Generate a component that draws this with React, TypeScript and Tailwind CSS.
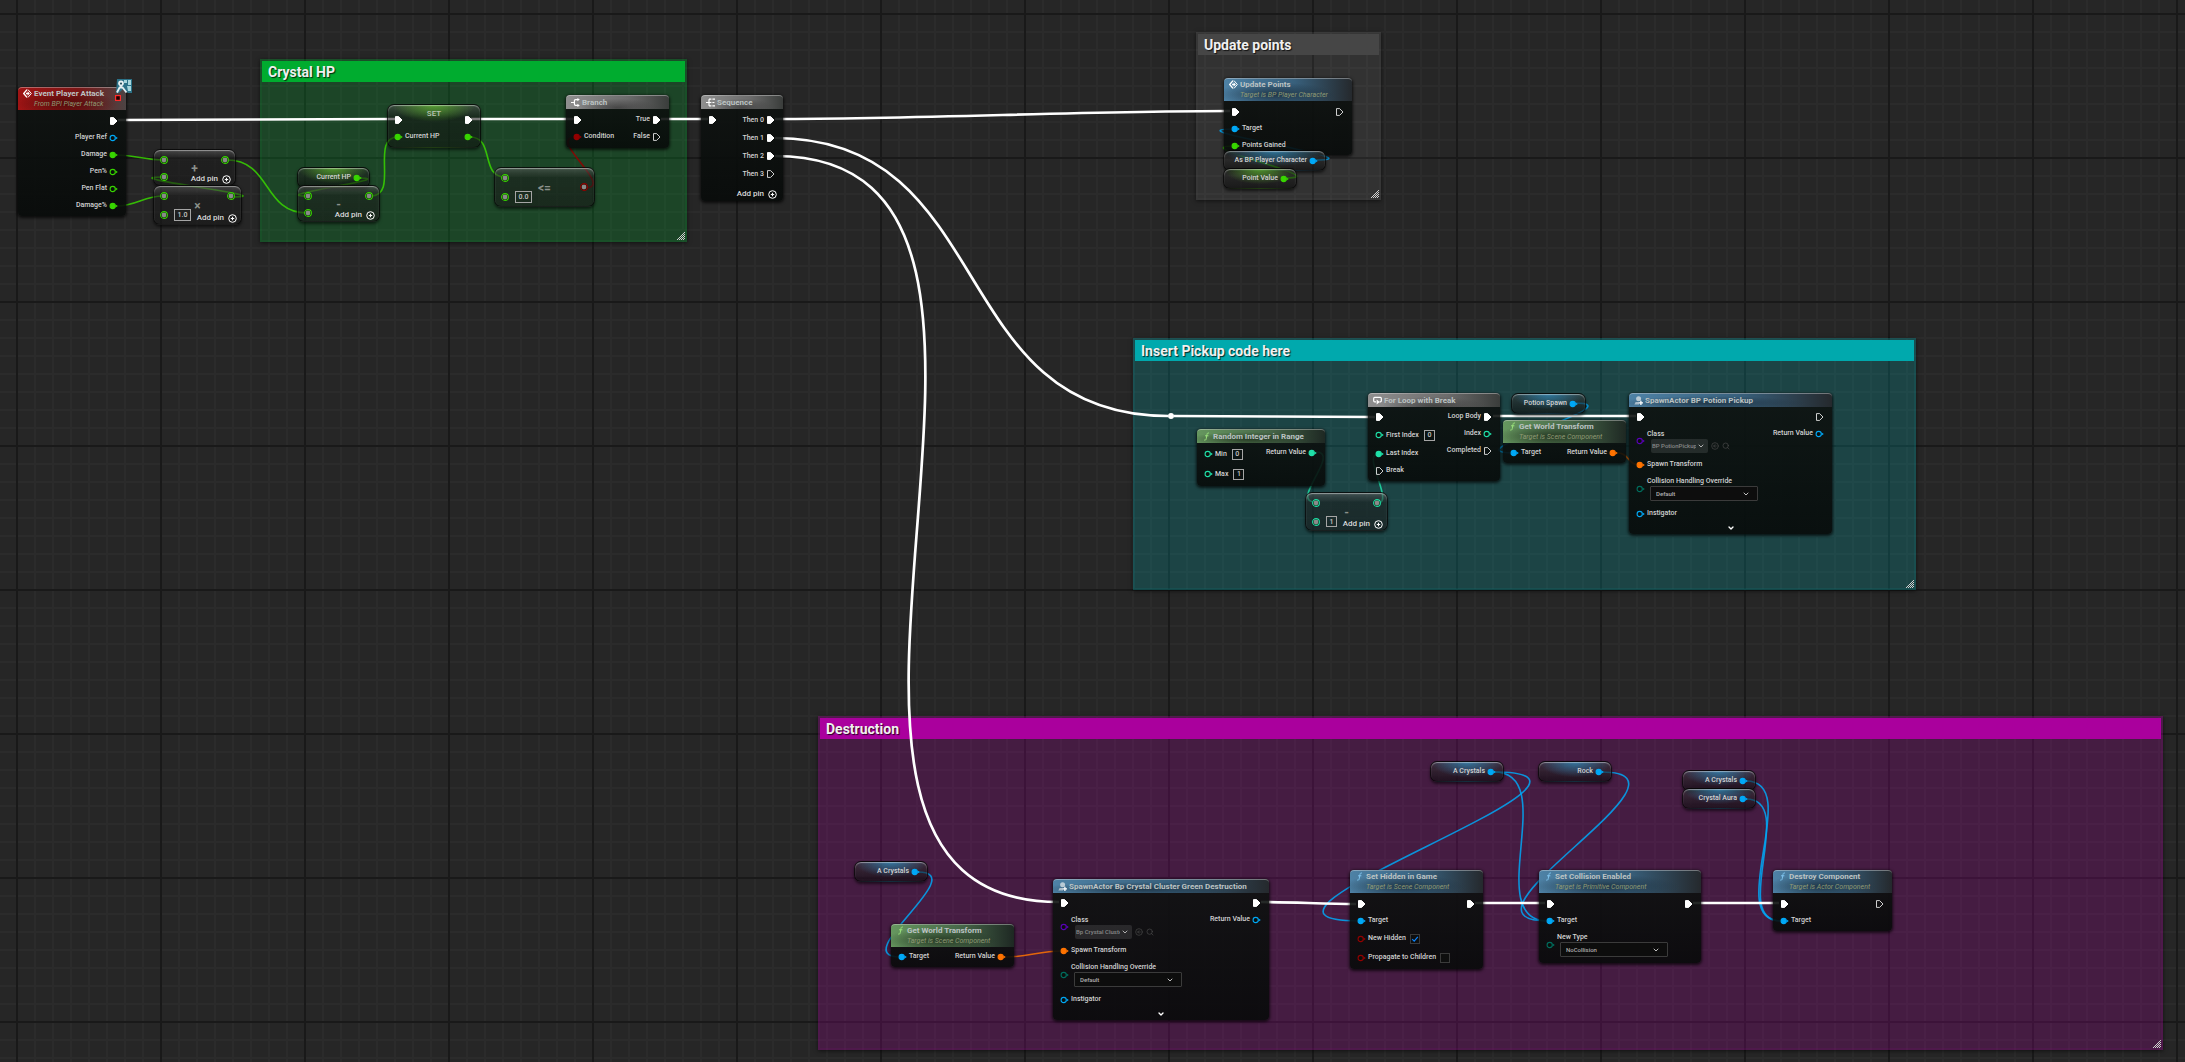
import type { ReactNode } from 'react';
import { ChevronDown, CircleArrowLeft, Search } from 'lucide-react';

type PinKind = 'exec' | 'float' | 'object' | 'int' | 'bool' | 'class' | 'enum' | 'struct';

const pinColor: Record<PinKind, string> = {
  exec: 'text-white',
  float: 'text-[#38d500]',
  object: 'text-[#00a8f6]',
  int: 'text-[#1fe0a8]',
  bool: 'text-[#930000]',
  class: 'text-[#5a00b8]',
  enum: 'text-[#006d5e]',
  struct: 'text-[#ff7300]',
};

// Same spline the graph editor uses: tangents grow with the distance, faster when going backwards
function wirePath(x1: number, y1: number, x2: number, y2: number) {
  const dx = x2 - x1;
  const dy = Math.abs(y2 - y1);
  const handle = dx >= 0 ? (dx + dy) / 3 : (2 * -dx + 1.5 * dy) / 3;
  return `M${x1} ${y1}C${x1 + handle} ${y1} ${x2 - handle} ${y2} ${x2} ${y2}`;
}

const wires: { kind: PinKind; points: [number, number, number, number] }[] = [
  { kind: 'float', points: [117, 155, 163, 160] },
  { kind: 'float', points: [117, 206, 163, 196] },
  { kind: 'float', points: [227, 160, 307, 213] },
  { kind: 'float', points: [232, 197, 163, 177] },
  { kind: 'float', points: [359, 178, 307, 196] },
  { kind: 'float', points: [371, 196, 398, 137] },
  { kind: 'float', points: [470, 137, 505, 177] },
  { kind: 'bool', points: [585, 188, 576, 137] },
  { kind: 'object', points: [1315, 160, 1234, 129] },
  { kind: 'float', points: [1286, 178, 1234, 146] },
  { kind: 'int', points: [1316, 452, 1315, 502] },
  { kind: 'int', points: [1378, 503, 1378, 454] },
  { kind: 'object', points: [1574, 403, 1513, 453] },
  { kind: 'struct', points: [1618, 453, 1639, 465] },
  { kind: 'struct', points: [1006, 957, 1061, 951] },
  { kind: 'object', points: [918, 872, 900, 957] },
  { kind: 'object', points: [1494, 772, 1359, 921] },
  { kind: 'object', points: [1494, 772, 1548, 921] },
  { kind: 'object', points: [1602, 772, 1548, 921] },
  { kind: 'object', points: [1746, 781, 1781, 921] },
  { kind: 'object', points: [1746, 799, 1781, 921] },
  { kind: 'exec', points: [118, 120, 395, 119] },
  { kind: 'exec', points: [471, 119, 574, 119] },
  { kind: 'exec', points: [661, 119, 708, 119] },
  { kind: 'exec', points: [775, 119, 1230, 111] },
  { kind: 'exec', points: [775, 138, 1168, 416] },
  { kind: 'exec', points: [775, 156, 1059, 902] },
  { kind: 'exec', points: [1174, 416, 1375, 417] },
  { kind: 'exec', points: [1493, 416, 1636, 416] },
  { kind: 'exec', points: [1261, 902, 1356, 904] },
  { kind: 'exec', points: [1475, 903, 1545, 903] },
  { kind: 'exec', points: [1693, 903, 1779, 903] },
];

function Wires() {
  return (
    <svg className="pointer-events-none absolute inset-0 h-full w-full" fill="none">
      {wires.map(({ kind, points }) => (
        <path
          key={points.join()}
          d={wirePath(...points)}
          className={pinColor[kind]}
          stroke="currentColor"
          strokeWidth={kind === 'exec' ? 2.7 : 1.6}
          strokeOpacity={kind === 'exec' ? 1 : 0.85}
        />
      ))}
      <circle cx="1171" cy="416" r="3" fill="#fff" />
    </svg>
  );
}

function Pin({ kind, on }: { kind: PinKind; on?: boolean }) {
  if (kind === 'exec') {
    return (
      <svg className="h-2 w-[9px] shrink-0 text-white" viewBox="0 0 9 8">
        <path
          d="M1.5.6H4.6L8 4 4.6 7.4H1.5Z"
          fill={on ? 'currentColor' : 'none'}
          stroke="currentColor"
          strokeWidth={on ? 1 : 0.8}
          strokeLinejoin="round"
        />
      </svg>
    );
  }
  return (
    <svg className={`h-2 w-[9px] shrink-0 ${pinColor[kind]}`} viewBox="0 0 9 8">
      <circle cx="3.7" cy="4" r="2.6" fill={on ? 'currentColor' : '#0a0f0c'} stroke="currentColor" strokeWidth="1.1" />
      <path d="M6.6 2.4 8.8 4 6.6 5.6Z" fill="currentColor" />
    </svg>
  );
}

function RoundPin({ kind }: { kind: PinKind }) {
  return (
    <svg className={`size-2 shrink-0 ${pinColor[kind]}`} viewBox="0 0 8 8">
      <circle cx="4" cy="4" r="3.1" fill="#8a8a8a" stroke="#10200f" strokeWidth="1.4" />
      <circle cx="4" cy="4" r="3.4" fill="none" stroke="currentColor" strokeWidth="1.1" />
    </svg>
  );
}

function Input({ kind, on, label, h = 'h-[17px]', children }: { kind: PinKind; on?: boolean; label?: string; h?: string; children?: ReactNode }) {
  return (
    <label className={`flex items-center gap-0.5 ${h}`}>
      <Pin kind={kind} on={on} />
      <span>{label}</span>
      {children}
    </label>
  );
}

function Output({ kind, on, label, h = 'h-[17px]' }: { kind: PinKind; on?: boolean; label?: string; h?: string }) {
  return (
    <div className={`flex items-center justify-end gap-0.5 ${h}`}>
      <span>{label}</span>
      <Pin kind={kind} on={on} />
    </div>
  );
}

function Value({ value, wide, label }: { value: string; wide?: boolean; label?: string }) {
  return (
    <input
      aria-label={label}
      defaultValue={value}
      className={`border border-[#a5a5a5] bg-transparent text-center text-[7px] leading-none text-[#c5c5c5] outline-none ${wide ? 'h-[12px] w-[17px]' : 'h-[11px] w-[11px]'}`}
    />
  );
}

function Check({ checked }: { checked?: boolean }) {
  return (
    <span className="ml-0.5 grid size-2.5">
      <input
        type="checkbox"
        defaultChecked={checked}
        className="peer size-2.5 appearance-none border border-[#3a3a3a] bg-[#0e0e0e] [grid-area:1/1]"
      />
      <svg className="pointer-events-none hidden size-2.5 text-[#0a84ff] [grid-area:1/1] peer-checked:block" viewBox="0 0 10 10">
        <path d="M2.2 5.2 4.2 7.2 7.8 2.8" fill="none" stroke="currentColor" strokeWidth="1.2" />
      </svg>
    </span>
  );
}

function EnumPicker({ label, value }: { label: string; value: string }) {
  return (
    <label className="flex items-center gap-0.5">
      <Pin kind="enum" />
      <span className="flex flex-col">
        <span className="leading-[10px]">{label}</span>
        <span className="ml-[3px] grid w-[108px] items-center">
          <select className="h-[15px] appearance-none rounded-[1px] border border-[#3b3b3b] bg-[#0d0d0d] pl-[5px] text-[6px] text-[#b0b0b0] [grid-area:1/1]">
            <option>{value}</option>
          </select>
          <ChevronDown className="pointer-events-none mr-2 size-2 justify-self-end text-[#c0c0c0] [grid-area:1/1]" strokeWidth={3} />
        </span>
      </span>
    </label>
  );
}

function ClassPicker({ value }: { value: string }) {
  return (
    <div className="mt-[4px] flex items-center gap-0.5">
      <Pin kind="class" />
      <div className="flex flex-col">
        <label htmlFor={value} className="leading-[10px]">
          Class
        </label>
        <div className="ml-[4px] flex items-center gap-[3px] text-[#4a4a4a]">
          <span className="grid w-[57px] grid-cols-1 items-center">
            <select
              id={value}
              className="h-[14px] w-full min-w-0 appearance-none overflow-hidden rounded-[2px] bg-white/10 pr-3 pl-px text-[6px] text-[#888] [grid-area:1/1]"
            >
              <option>{value}</option>
            </select>
            <ChevronDown className="pointer-events-none mr-[3px] size-2 justify-self-end text-[#b0b0b0] [grid-area:1/1]" strokeWidth={3} />
          </span>
          <button aria-label="Use selected class">
            <CircleArrowLeft className="size-2" />
          </button>
          <button aria-label="Browse to class">
            <Search className="size-2" />
          </button>
        </div>
      </div>
    </div>
  );
}

function AddPin() {
  return (
    <button className="flex items-center justify-end gap-1 pr-1 text-[8px] leading-[12px] text-[#d8d8d8]">
      Add pin
      <svg className="size-[9px]" viewBox="0 0 9 9" fill="none" stroke="#fff">
        <circle cx="4.5" cy="4.5" r="3.8" strokeWidth="1" />
        <path d="M4.5 2.8V6.2M2.8 4.5H6.2" strokeWidth="1.1" />
      </svg>
    </button>
  );
}

const icons = {
  event: (
    <svg className="size-[9px] shrink-0" viewBox="0 0 9 9" fill="none" stroke="#fff">
      <path d="M4 .6.7 4.5 4 8.4" strokeWidth="1.4" />
      <path d="M5 .6 8.3 4.5 5 8.4" strokeWidth="1" />
      <path d="M3 3.7H4.6V2.3L6.9 4.5 4.6 6.7V5.3H3Z" fill="#fff" stroke="none" />
    </svg>
  ),
  fn: (
    <svg className="size-[9px] shrink-0" viewBox="0 0 9 9" fill="none" stroke="currentColor" strokeWidth="1">
      <path d="M7 1.2C5.8.6 5.2 1.2 5 2.4L4.2 6.8C4 8 3.2 8.4 2.2 8M3 3.8H6.4" />
    </svg>
  ),
  branch: (
    <svg className="size-[9px] shrink-0" viewBox="0 0 9 9" fill="none" stroke="#fff" strokeWidth="1.2">
      <path d="M0 4.5H3.2M7 1.6H4.6Q3.4 1.6 3.4 3V6Q3.4 7.4 4.6 7.4H7" />
      <path d="M6.4 0 8.8 1.6 6.4 3.2ZM6.4 5.8 8.8 7.4 6.4 9Z" fill="#fff" stroke="none" />
    </svg>
  ),
  sequence: (
    <svg className="size-[9px] shrink-0" viewBox="0 0 9 9" fill="none" stroke="#fff" strokeWidth="1.2">
      <path d="M0 4.5H5.4M3 1.2V7.8M3 1.2H5.4M3 7.8H5.4M6.4 1.2H9M6.4 4.5H8.4M6.4 7.8H9" />
    </svg>
  ),
  loop: (
    <svg className="size-[9px] shrink-0" viewBox="0 0 9 9" fill="none" stroke="#fff" strokeWidth="1.2">
      <path d="M3 5.8H1.6Q.7 5.8.7 4.8V2.4Q.7 1.4 1.6 1.4H7.4Q8.3 1.4 8.3 2.4V4.8Q8.3 5.8 7.4 5.8H6.6" />
      <path d="M3.6 3.4 6.8 5.9 3.6 8.6Z" fill="#fff" stroke="none" />
    </svg>
  ),
  spawn: (
    <svg className="size-[9px] shrink-0" viewBox="0 0 9 9" fill="#d5dde2">
      <circle cx="4.6" cy="2.7" r="2.5" opacity="0.8" />
      <path d="M.4 8.4 1.6 6H5V8.4Z" opacity="0.7" />
      <path d="M6.9 4.7V8.9M4.8 6.8H9" stroke="#fff" strokeWidth="1.3" />
    </svg>
  ),
};

const headerTone = {
  red: 'bg-[radial-gradient(ellipse_at_45%_70%,#4a0808cc_0%,transparent_60%),linear-gradient(90deg,#a01414_0%,#7c1616_55%,#4c4444_100%)]',
  gray: 'bg-[radial-gradient(ellipse_at_50%_90%,#3c3c3ccc_0%,transparent_55%),linear-gradient(90deg,#8f8f8f_0%,#6c6c6c_60%,#3a3d3b_100%)]',
  blue: 'bg-[radial-gradient(ellipse_at_40%_70%,#1c3040dd_0%,transparent_55%),linear-gradient(90deg,#4e82a6_0%,#38607c_55%,#25292d_100%)] text-[#7fc4ee]',
  green: 'bg-[radial-gradient(ellipse_at_40%_70%,#22331fdd_0%,transparent_55%),linear-gradient(90deg,#66975f_0%,#48694a_55%,#1e2823_100%)] text-[#9be27c]',
};

interface NodeProps {
  tone: keyof typeof headerTone;
  icon: keyof typeof icons;
  title: string;
  subtitle?: string;
  place: string;
  children: ReactNode;
}

function Node({ tone, icon, title, subtitle, place, children }: NodeProps) {
  return (
    <article className={`absolute flex flex-col rounded-[4px] bg-linear-to-b from-[#0e1210]/90 to-[#070a09]/90 shadow-[0_1px_3px_1px_#000000b0] ${place}`}>
      <header className={`flex gap-[2px] rounded-t-[4px] border-t border-white/35 pl-[5px] ${subtitle ? 'h-[23px] pt-px' : 'h-[14px] items-center'} ${headerTone[tone]}`}>
        {icons[icon]}
        <div className="flex flex-col whitespace-nowrap">
          <h3 className="text-[8px] leading-[10px] font-bold text-[#bcc3c3]">{title}</h3>
          {subtitle && <p className="text-[7px] leading-[10px] font-normal text-[#8f9a74] italic">{subtitle}</p>}
        </div>
      </header>
      {children}
    </article>
  );
}

function Body({ children, pad = 'pt-[2px]' }: { children: ReactNode; pad?: string }) {
  return <div className={`flex justify-between pr-[8px] pl-[7px] ${pad}`}>{children}</div>;
}

const glass =
  'rounded-[7px] border border-black/60 shadow-[0_2px_3px_#00000090,inset_0_1px_1px_#ffffff70]';

function Getter({ name, kind, place }: { name: string; kind: PinKind; place: string }) {
  const glow =
    kind === 'float'
      ? 'bg-[radial-gradient(ellipse_50%_80%_at_50%_0%,#5cb02ecc,transparent),linear-gradient(#2a2a2a90,#0c0c0ca0)]'
      : 'bg-[radial-gradient(ellipse_50%_80%_at_50%_0%,#2f86b5cc,transparent),linear-gradient(#3a3a3a90,#0c0c0ca0)]';
  return (
    <div className={`absolute flex h-[21px] items-center justify-end gap-[2px] pr-[7px] ${glass} ${glow} ${place}`}>
      <span>{name}</span>
      <Pin kind={kind} on />
    </div>
  );
}

interface MathNodeProps {
  op: string;
  kind: PinKind;
  out?: PinKind;
  value?: string;
  addPin?: boolean;
  place: string;
}

function MathNode({ op, kind, out, value, addPin = true, place }: MathNodeProps) {
  return (
    <div className={`absolute grid bg-linear-to-b from-[#5c5c5c]/60 from-0% via-[#1c1c1c]/55 via-25% to-[#181818]/60 ${glass} ${place}`}>
      <span className="place-self-center pt-[2px] text-[12px] leading-none font-bold text-[#8b918b] [grid-area:1/1]">{op}</span>
      <div className="flex flex-col gap-[9px] justify-self-start pt-[6px] pl-[6px] [grid-area:1/1]">
        <RoundPin kind={kind} />
        <div className="flex items-center gap-1.5">
          <RoundPin kind={kind} />
          {value && <Value value={value} wide={value.length > 1} label={`${op} operand`} />}
        </div>
      </div>
      <div className={`flex flex-col items-end justify-self-end [grid-area:1/1] ${addPin ? 'justify-between pt-[6px]' : 'justify-center'}`}>
        <span className="pr-[6px]">
          <RoundPin kind={out ?? kind} />
        </span>
        {addPin && <AddPin />}
      </div>
    </div>
  );
}

const commentTone = {
  green: ['bg-[#00ac2f]', 'bg-[#00ac2f]/24 border-[#00ac2f]/10'],
  gray: ['bg-[#464646]', 'bg-white/6 border-white/2'],
  teal: ['bg-[#00a9ad]', 'bg-[#00a9ad]/24 border-[#00a9ad]/10'],
  purple: ['bg-[#aa009d]', 'bg-[#aa009d]/24 border-[#aa009d]/10'],
};

function Comment({ title, tone, place }: { title: string; tone: keyof typeof commentTone; place: string }) {
  const [head, body] = commentTone[tone];
  return (
    <section className={`absolute flex flex-col border-2 shadow-[0_1px_4px_#00000090] ${body} ${place}`}>
      <h2 className={`h-[21px] pl-[6px] text-[14px] leading-[22px] font-bold whitespace-nowrap text-[#f0f0f0] [text-shadow:1px_1px_1px_#000000c0] ${head}`}>
        {title}
      </h2>
      <svg className="mt-auto size-2 self-end" viewBox="0 0 8 8" stroke="#d0d0d0" strokeWidth="1">
        <path d="M0 8 8 0M2 8 8 2M4 8 8 4M6 8 8 6" />
      </svg>
    </section>
  );
}

function SpawnActor({ title, value, out, place }: { title: string; value: string; out?: boolean; place: string }) {
  return (
    <Node tone="blue" icon="spawn" title={title} place={place}>
      <Body pad="pt-px">
        <div>
          <Input kind="exec" on />
          <ClassPicker value={value} />
          <div className="my-[3px]">
            <Input kind="struct" on label="Spawn Transform" />
          </div>
          <EnumPicker label="Collision Handling Override" value="Default" />
          <div className="mt-[4px]">
            <Input kind="object" label="Instigator" />
          </div>
        </div>
        <div>
          <Output kind="exec" on={out} />
          <Output kind="object" label="Return Value" />
        </div>
      </Body>
      <button aria-label="Show advanced pins" className="flex h-3 items-center justify-center text-white">
        <ChevronDown className="size-2" strokeWidth={4} />
      </button>
    </Node>
  );
}

function WorldTransform({ place }: { place: string }) {
  return (
    <Node tone="green" icon="fn" title="Get World Transform" subtitle="Target is Scene Component" place={place}>
      <Body pad="pt-px pb-[2px]">
        <Input kind="object" on label="Target" />
        <Output kind="struct" on label="Return Value" />
      </Body>
    </Node>
  );
}

export default function App() {
  return (
    <main className="relative min-h-screen overflow-hidden bg-[#262626] bg-[linear-gradient(90deg,#191919_2px,transparent_2px),linear-gradient(#191919_2px,transparent_2px),linear-gradient(90deg,#2b2b2b_2px,transparent_2px),linear-gradient(#2b2b2b_2px,transparent_2px)] bg-size-[144px_144px,144px_144px,18px_18px,18px_18px] bg-position-[16px_13px,16px_13px,16px_13px,16px_13px] font-['Roboto',sans-serif] text-[7px] leading-none font-medium whitespace-nowrap text-[#d2d2d2]">
      <Comment title="Crystal HP" tone="green" place="left-[260px] top-[59px] w-[427px] h-[183px]" />
      <Comment title="Update points" tone="gray" place="left-[1196px] top-[32px] w-[185px] h-[168px]" />
      <Comment title="Insert Pickup code here" tone="teal" place="left-[1133px] top-[338px] w-[783px] h-[252px]" />
      <Comment title="Destruction" tone="purple" place="left-[818px] top-[716px] w-[1345px] h-[334px]" />
      <Wires />

      <Node tone="red" icon="event" title="Event Player Attack" subtitle="From BPI Player Attack" place="left-[18px] top-[87px] w-[108px]">
        <Body pad="pt-[2px] pb-[2px]">
          <span />
          <div>
            <Output kind="exec" on />
            <Output kind="object" label="Player Ref" />
            <Output kind="float" on label="Damage" />
            <Output kind="float" label="Pen%" />
            <Output kind="float" label="Pen Flat" />
            <Output kind="float" on label="Damage%" />
          </div>
        </Body>
        {/* interface badge and delegate pin */}
        <svg className="absolute -top-2 -right-[7px] h-[23px] w-[18px]" viewBox="0 0 18 23">
          <path d="M2 0H17V14H13L8 10 4 14H1Z" fill="#2b7288" />
          <path d="M9 1H12V4H9ZM13 1H16V6H13ZM12 7H16V12H13Z" fill="#a5d5dc" />
          <path d="M2 13.5 4.6 8.5 7.5 8.5 11.5 13.5M6 8.5V5" fill="none" stroke="#e4eef0" strokeWidth="1.8" />
          <circle cx="6" cy="4.2" r="2.8" fill="#e8f2f4" />
          <circle cx="6" cy="4.6" r="1.1" fill="#25505e" />
          <rect x=".6" y="16.6" width="4.8" height="4.8" fill="#200" stroke="#ff2a2a" strokeWidth="1.2" />
        </svg>
      </Node>

      <MathNode op="+" kind="float" place="left-[153px] top-[149px] w-[83px] h-[37px]" />
      <MathNode op="×" kind="float" value="1.0" place="left-[153px] top-[185px] w-[89px] h-[40px]" />
      <Getter name="Current HP" kind="float" place="left-[297px] top-[167px] w-[73px]" />
      <MathNode op="-" kind="float" place="left-[297px] top-[185px] w-[83px] h-[37px]" />

      <div className={`absolute top-[104px] left-[387px] grid h-[44px] w-[94px] bg-[radial-gradient(ellipse_45%_40%_at_50%_0%,#5cb02ecc,transparent),linear-gradient(#50505090,#14141490_30%,#101410a0)] ${glass}`}>
        <h3 className="justify-self-center pt-[4px] text-[8px] leading-[10px] text-[#b8c4b4] [grid-area:1/1]">SET</h3>
        <div className="flex justify-between pt-[6px] pr-[7px] pl-[6px] [grid-area:1/1]">
          <div>
            <Input kind="exec" on />
            <Input kind="float" on label="Current HP" />
          </div>
          <div>
            <Output kind="exec" on />
            <Output kind="float" on />
          </div>
        </div>
      </div>

      <MathNode op="<=" kind="float" out="bool" value="0.0" addPin={false} place="left-[494px] top-[167px] w-[101px] h-[40px]" />

      <Node tone="gray" icon="branch" title="Branch" place="left-[566px] top-[95px] w-[103px]">
        <Body pad="pt-[2px] pb-[3px]">
          <div>
            <Input kind="exec" on />
            <Input kind="bool" on label="Condition" />
          </div>
          <div>
            <Output kind="exec" on label="True" />
            <Output kind="exec" label="False" />
          </div>
        </Body>
      </Node>

      <Node tone="gray" icon="sequence" title="Sequence" place="left-[701px] top-[95px] w-[82px]">
        <Body>
          <Input kind="exec" on />
          <div>
            <Output h="h-[18px]" kind="exec" on label="Then 0" />
            <Output h="h-[18px]" kind="exec" on label="Then 1" />
            <Output h="h-[18px]" kind="exec" on label="Then 2" />
            <Output h="h-[18px]" kind="exec" label="Then 3" />
          </div>
        </Body>
        <div className="flex justify-end pt-[5px] pr-[2px] pb-px">
          <AddPin />
        </div>
      </Node>

      <Node tone="blue" icon="event" title="Update Points" subtitle="Target is BP Player Character" place="left-[1224px] top-[78px] w-[128px]">
        <Body pad="pt-[2px] pb-[1px]">
          <div>
            <Input kind="exec" on />
            <Input kind="object" on label="Target" />
            <Input kind="float" on label="Points Gained" />
          </div>
          <Output kind="exec" />
        </Body>
      </Node>
      <Getter name="As BP Player Character" kind="object" place="left-[1223px] top-[150px] w-[103px]" />
      <Getter name="Point Value" kind="float" place="left-[1223px] top-[168px] w-[74px]" />

      <Node tone="green" icon="fn" title="Random Integer in Range" place="left-[1197px] top-[429px] w-[128px]">
        <Body pad="pt-px pb-[2px]">
          <div>
            <Input h="h-5" kind="int" label="Min">
              <span className="w-px" />
              <Value value="0" />
            </Input>
            <Input h="h-5" kind="int" label="Max">
              <span className="w-px" />
              <Value value="1" />
            </Input>
          </div>
          <Output kind="int" on label="Return Value" />
        </Body>
      </Node>
      <MathNode op="-" kind="int" value="1" place="left-[1305px] top-[492px] w-[83px] h-[39px]" />

      <Node tone="gray" icon="loop" title="For Loop with Break" place="left-[1368px] top-[393px] w-[132px]">
        <Body pad="pt-px pb-[2px]">
          <div>
            <Input kind="exec" on />
            <Input h="h-5" kind="int" label="First Index">
              <span className="w-px" />
              <Value value="0" />
            </Input>
            <Input kind="int" on label="Last Index" />
            <Input kind="exec" label="Break" />
          </div>
          <div>
            <Output kind="exec" on label="Loop Body" />
            <Output kind="int" label="Index" />
            <Output kind="exec" label="Completed" />
          </div>
        </Body>
      </Node>

      <Getter name="Potion Spawn" kind="object" place="left-[1511px] top-[393px] w-[75px]" />
      <WorldTransform place="left-[1503px] top-[420px] w-[123px]" />
      <SpawnActor title="SpawnActor BP Potion Pickup" value="BP PotionPickup" place="left-[1629px] top-[393px] w-[203px]" />

      <Getter name="A Crystals" kind="object" place="left-[854px] top-[861px] w-[74px]" />
      <WorldTransform place="left-[891px] top-[924px] w-[123px]" />
      <SpawnActor title="SpawnActor Bp Crystal Cluster Green Destruction" value="Bp Crystal Cluster Green" out place="left-[1053px] top-[879px] w-[216px]" />

      <Getter name="A Crystals" kind="object" place="left-[1430px] top-[761px] w-[74px]" />
      <Getter name="Rock" kind="object" place="left-[1538px] top-[761px] w-[74px]" />
      <Getter name="A Crystals" kind="object" place="left-[1682px] top-[770px] w-[74px]" />
      <Getter name="Crystal Aura" kind="object" place="left-[1682px] top-[788px] w-[74px]" />

      <Node tone="blue" icon="fn" title="Set Hidden in Game" subtitle="Target is Scene Component" place="left-[1350px] top-[870px] w-[133px]">
        <Body pad="pt-[2px] pb-[2px]">
          <div>
            <Input kind="exec" on />
            <Input kind="object" on label="Target" />
            <Input h="h-[19px]" kind="bool" label="New Hidden">
              <Check checked />
            </Input>
            <Input h="h-[19px]" kind="bool" label="Propagate to Children">
              <Check />
            </Input>
          </div>
          <Output kind="exec" on />
        </Body>
      </Node>

      <Node tone="blue" icon="fn" title="Set Collision Enabled" subtitle="Target is Primitive Component" place="left-[1539px] top-[870px] w-[162px]">
        <Body pad="pt-[2px] pb-[6px]">
          <div>
            <Input kind="exec" on />
            <Input kind="object" on label="Target" />
            <div className="pt-[3px]">
              <EnumPicker label="New Type" value="NoCollision" />
            </div>
          </div>
          <Output kind="exec" on />
        </Body>
      </Node>

      <Node tone="blue" icon="fn" title="Destroy Component" subtitle="Target is Actor Component" place="left-[1773px] top-[870px] w-[119px]">
        <Body pad="pt-[2px] pb-[2px]">
          <div>
            <Input kind="exec" on />
            <Input kind="object" on label="Target" />
          </div>
          <Output kind="exec" />
        </Body>
      </Node>
    </main>
  );
}
